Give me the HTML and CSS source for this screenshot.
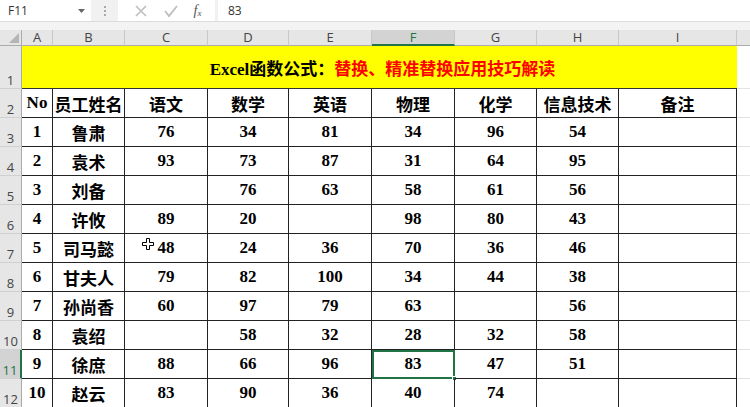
FILE: index.html
```html
<!DOCTYPE html>
<html lang="zh">
<head>
<meta charset="utf-8">
<title>Excel</title>
<link rel="stylesheet" href="styles.css">
</head>
<body>
<div class="fbar">
  <div class="namebox"><span>F11</span><svg class="dd" width="7" height="4" viewBox="0 0 7 4"><path d="M0 0h7L3.5 4z" fill="#666"/></svg></div>
  <div class="grip"><i></i><i></i><i></i></div>
  <div class="btns">
    <svg width="14" height="14" viewBox="0 0 14 14"><path d="M2 2l10 10M12 2L2 12" stroke="#bdbdbd" stroke-width="1.6"/></svg>
    <svg width="16" height="14" viewBox="0 0 16 14"><path d="M2 7l4 5L14 2" stroke="#bdbdbd" stroke-width="1.8" fill="none"/></svg>
    <span class="fx">f<sub>x</sub></span>
  </div>
  <div class="input">83</div>
</div>
<div class="band"></div>
<div class="sheet">
  <div class="ch corner"><svg width="10" height="10" viewBox="0 0 10 10"><path d="M10 0V10H0z" fill="#b5b5b5"/></svg></div>
  <div class="ch">A</div><div class="ch">B</div><div class="ch">C</div><div class="ch">D</div><div class="ch">E</div><div class="ch sel">F</div><div class="ch">G</div><div class="ch">H</div><div class="ch">I</div><div class="ch last"></div>

  <div class="rh">1</div><div class="title">Excel函数公式：<span class="red">替换、精准替换应用技巧解读</span></div><div class="ex"></div>

  <div class="rh">2</div><div class="c">No</div><div class="c">员工姓名</div><div class="c">语文</div><div class="c">数学</div><div class="c">英语</div><div class="c">物理</div><div class="c">化学</div><div class="c">信息技术</div><div class="c">备注</div><div class="ex"></div>

  <div class="rh">3</div><div class="c">1</div><div class="c">鲁肃</div><div class="c">76</div><div class="c">34</div><div class="c">81</div><div class="c">34</div><div class="c">96</div><div class="c">54</div><div class="c"></div><div class="ex"></div>
  <div class="rh">4</div><div class="c">2</div><div class="c">袁术</div><div class="c">93</div><div class="c">73</div><div class="c">87</div><div class="c">31</div><div class="c">64</div><div class="c">95</div><div class="c"></div><div class="ex"></div>
  <div class="rh">5</div><div class="c">3</div><div class="c">刘备</div><div class="c"></div><div class="c">76</div><div class="c">63</div><div class="c">58</div><div class="c">61</div><div class="c">56</div><div class="c"></div><div class="ex"></div>
  <div class="rh">6</div><div class="c">4</div><div class="c">许攸</div><div class="c">89</div><div class="c">20</div><div class="c"></div><div class="c">98</div><div class="c">80</div><div class="c">43</div><div class="c"></div><div class="ex"></div>
  <div class="rh">7</div><div class="c">5</div><div class="c">司马懿</div><div class="c">48</div><div class="c">24</div><div class="c">36</div><div class="c">70</div><div class="c">36</div><div class="c">46</div><div class="c"></div><div class="ex"></div>
  <div class="rh">8</div><div class="c">6</div><div class="c">甘夫人</div><div class="c">79</div><div class="c">82</div><div class="c">100</div><div class="c">34</div><div class="c">44</div><div class="c">38</div><div class="c"></div><div class="ex"></div>
  <div class="rh">9</div><div class="c">7</div><div class="c">孙尚香</div><div class="c">60</div><div class="c">97</div><div class="c">79</div><div class="c">63</div><div class="c"></div><div class="c">56</div><div class="c"></div><div class="ex"></div>
  <div class="rh">10</div><div class="c">8</div><div class="c">袁绍</div><div class="c"></div><div class="c">58</div><div class="c">32</div><div class="c">28</div><div class="c">32</div><div class="c">58</div><div class="c"></div><div class="ex"></div>
  <div class="rh rsel">11</div><div class="c">9</div><div class="c">徐庶</div><div class="c">88</div><div class="c">66</div><div class="c">96</div><div class="c active">83<i class="handle"></i></div><div class="c">47</div><div class="c">51</div><div class="c"></div><div class="ex"></div>
  <div class="rh">12</div><div class="c">10</div><div class="c">赵云</div><div class="c">83</div><div class="c">90</div><div class="c">36</div><div class="c">40</div><div class="c">74</div><div class="c"></div><div class="c"></div><div class="ex"></div>

  <svg class="cursor" width="12" height="12" viewBox="0 0 12 12"><path d="M4.5 0.5h3v4h4v3h-4v4h-3v-4h-4v-3h4z" fill="#fff" stroke="#000" stroke-width="1"/></svg>
</div>
</body>
</html>
```
FILE: styles.css
```css
* { box-sizing: border-box; }
html, body { margin: 0; padding: 0; }
body {
  width: 750px;
  height: 407px;
  overflow: hidden;
  background: #f3f3f3;
  font-family: "Open Sans", "Noto Sans", sans-serif;
}
.fbar {
  height: 21px;
  display: flex;
  align-items: stretch;
  background: #f1f1f1;
}
.namebox {
  width: 91px;
  background: #fff;
  display: flex;
  align-items: center;
  justify-content: space-between;
  padding: 0 6px 0 8px;
  font-size: 12px;
  color: #333;
}
.grip {
  width: 27px;
  display: flex;
  flex-direction: column;
  align-items: center;
  justify-content: center;
  gap: 2px;
}
.grip i { width: 2px; height: 2px; background: #a8a8a8; display: block; }
.btns {
  width: 97px;
  background: #fff;
  display: flex;
  align-items: center;
  justify-content: space-around;
  padding: 0 6px 0 8px;
}
.fx {
  font-family: "Liberation Serif", serif;
  font-style: italic;
  font-size: 14px;
  color: #555;
  line-height: 1;
}
.fx sub { font-size: 9px; vertical-align: -1px; }
.input {
  flex: 1;
  margin-left: 3px;
  background: #fff;
  font-size: 12px;
  color: #333;
  padding-left: 10px;
  display: flex;
  align-items: center;
}
.band { height: 9px; background: #f3f3f3; border-top: 1px solid #dcdcdc; }
.sheet {
  position: relative;
  display: grid;
  grid-template-columns: 22px 31px 72px 83px 81px 83px 83px 82px 82px 118px 1fr;
  grid-template-rows: 16px 43px repeat(11, 29px);
  background: #fff;
}
.ch {
  background: #e6e6e6;
  border-right: 1px solid #c8c8c8;
  border-bottom: 1px solid #ababab;
  font-size: 13px;
  color: #444;
  display: flex;
  align-items: center;
  justify-content: center;
  line-height: 1;
}
.ch.corner { justify-content: flex-end; align-items: flex-end; padding: 0 2px 2px 0; border-right-color: #ababab; }
.ch.last { border-right: none; }
.ch.sel { background: #d3d3d3; border-bottom: 2px solid #217346; color: #217346; }
.rh {
  background: #e6e6e6;
  border-right: 1px solid #ababab;
  border-bottom: 1px solid #d0d0d0;
  font-size: 13px;
  color: #444;
  display: flex;
  align-items: flex-end;
  justify-content: center;
  padding-bottom: 1px;
  line-height: 1;
}
.rh.rsel { background: #d3d3d3; color: #217346; border-right: 2px solid #217346; }
.title {
  grid-column: 2 / 11;
  background: #ffff00;
  border-bottom: 1px solid #333;
  display: flex;
  align-items: center;
  justify-content: center;
  padding-left: 6px;
  font-family: "Liberation Serif", "Noto Sans CJK SC", serif;
  font-weight: bold;
  font-size: 17px;
  color: #000;
}
.red { color: #ff0000; }
.c {
  border-right: 1px solid #222;
  border-bottom: 1px solid #222;
  display: flex;
  align-items: center;
  justify-content: center;
  font-family: "Liberation Serif", "Noto Sans CJK SC", serif;
  font-weight: bold;
  font-size: 17px;
  color: #000;
  position: relative;
}
.ex { border-bottom: 1px solid #e2e2e2; background: #fff; }
.c.active { outline: 2px solid #217346; outline-offset: -2px; }
.handle {
  position: absolute;
  right: -3px;
  bottom: -3px;
  width: 5px;
  height: 5px;
  background: #217346;
  border: 1px solid #fff;
}
.cursor { position: absolute; left: 142px; top: 208px; }
```
